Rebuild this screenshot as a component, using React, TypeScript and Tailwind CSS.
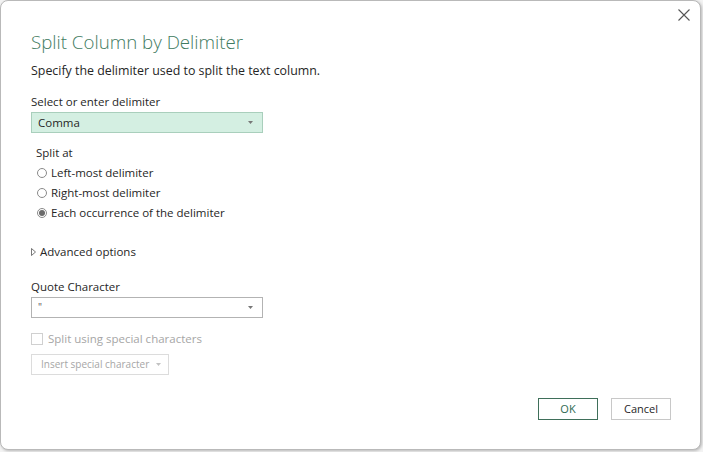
import React, { useState } from 'react';

const font = { fontFamily: '"Open Sans", "Noto Sans", sans-serif' };

const Caret: React.FC<{ className?: string }> = ({ className }) => (
  <svg width="5" height="3" viewBox="0 0 5 3" className={className}>
    <path d="M0 0 L5 0 L2.5 3 Z" fill="currentColor" />
  </svg>
);

const Radio: React.FC<{ checked: boolean; label: string; onClick: () => void }> = ({ checked, label, onClick }) => (
  <div className="flex items-center h-5 cursor-default" onClick={onClick}>
    <span className="w-[10px] h-[10px] rounded-full border border-[#8a8a8a] bg-white flex items-center justify-center ml-px">
      {checked && <span className="w-[6px] h-[6px] rounded-full bg-[#6b6b6b]" />}
    </span>
    <span className="ml-[4px] text-[11.5px] text-[#262626]">{label}</span>
  </div>
);

export default function App() {
  const [mode, setMode] = useState(2);
  const options = ['Left-most delimiter', 'Right-most delimiter', 'Each occurrence of the delimiter'];

  return (
    <div className="w-[703px] h-[452px] bg-[#f3f3f3] overflow-hidden" style={font}>
      <div className="relative w-[701px] h-[450px] bg-white border border-[#b9b9b9] rounded-lg shadow-[1px_1px_3px_rgba(0,0,0,0.25)]">
        <button className="absolute right-[9px] top-[7px] w-[14px] h-[14px] flex items-center justify-center text-[#555]">
          <svg width="12" height="12" viewBox="0 0 12 12">
            <path d="M0.5 0.5 L11.5 11.5 M11.5 0.5 L0.5 11.5" stroke="currentColor" strokeWidth="1.1" fill="none" />
          </svg>
        </button>

        <div className="pl-[30px] pt-[27px] flex flex-col">
          <h1 className="text-[18.7px] font-light text-[#3f7b61] leading-[28px]">Split Column by Delimiter</h1>
          <p className="mt-[5px] text-[12.4px] text-[#262626] leading-5">Specify the delimiter used to split the text column.</p>

          <label className="mt-[11px] text-[11.5px] text-[#262626] leading-5">Select or enter delimiter</label>
          <div className="w-[232px] h-[21px] bg-[#d4efe2] border border-[#a9cfbc] flex items-center justify-between pl-[6px] pr-[9px]">
            <span className="text-[11.5px] text-[#262626]">Comma</span>
            <Caret className="text-[#777]" />
          </div>

          <div className="mt-[10px] pl-[5px] flex flex-col">
            <span className="text-[11.5px] text-[#262626] leading-5">Split at</span>
            {options.map((o, i) => (
              <Radio key={o} label={o} checked={mode === i} onClick={() => setMode(i)} />
            ))}
          </div>

          <div className="mt-[19px] flex items-center h-5">
            <svg width="5" height="8" viewBox="0 0 5 8" className="text-[#555]">
              <path d="M0.5 0.5 L4.5 4 L0.5 7.5 Z" stroke="currentColor" strokeWidth="0.8" fill="none" />
            </svg>
            <span className="ml-[4px] text-[11.5px] text-[#262626]">Advanced options</span>
          </div>

          <label className="mt-[15px] text-[11.5px] text-[#262626] leading-5">Quote Character</label>
          <div className="w-[232px] h-[21px] bg-white border border-[#b3b3b3] flex items-center justify-between pl-[6px] pr-[9px]">
            <span className="text-[10px] text-[#555]">"</span>
            <Caret className="text-[#777]" />
          </div>

          <div className="mt-[15px] flex items-center h-[12px]">
            <span className="w-[12px] h-[12px] border border-[#d0d0d0] bg-white" />
            <span className="ml-[5px] text-[11.5px] text-[#a6a6a6]">Split using special characters</span>
          </div>

          <div className="mt-[9px] w-[138px] h-[21px] border border-[#dcdcdc] flex items-center pl-[9px] gap-[7px]">
            <span className="text-[10px] text-[#a6a6a6] whitespace-nowrap">Insert special character</span>
            <Caret className="text-[#c2c2c2]" />
          </div>
        </div>

        <div className="absolute right-[29px] bottom-[29px] flex gap-[13px]">
          <button className="w-[60px] h-[22px] border border-[#3f6f5a] text-[11px] text-[#2f6b52] bg-white">OK</button>
          <button className="w-[60px] h-[22px] border border-[#c8c8c8] text-[11px] text-[#262626] bg-white">Cancel</button>
        </div>
      </div>
    </div>
  );
}
